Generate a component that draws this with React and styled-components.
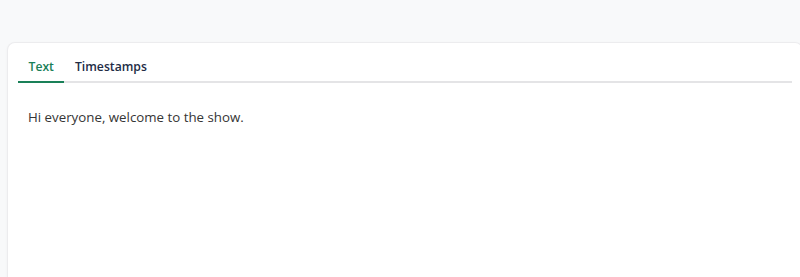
import React, { useState } from "react";
import styled, { createGlobalStyle } from "styled-components";

const GlobalStyle = createGlobalStyle`
    html, body {
        margin: 0;
        padding: 0;
        background: #f8f9fa;
        font-family: "Open Sans", "Noto Sans", sans-serif;
        overflow: hidden;
    }
`;

const Page = styled.div`
    width: 800px;
    height: 277px;
    padding: 42px 0 0 7px;
    box-sizing: border-box;
    overflow: hidden;
`;

const Card = styled.div`
    width: 796px;
    height: 235px;
    background: #ffffff;
    border: 1px solid #ececee;
    border-bottom: none;
    border-radius: 8px 8px 0 0;
    box-shadow: 0 1px 3px rgba(0, 0, 0, 0.04);
    padding: 0 10px;
    box-sizing: border-box;
`;

const TabList = styled.div`
    display: flex;
    align-items: stretch;
    border-bottom: 2px solid #e4e4e6;
    height: 38px;
`;

const Tab = styled.button`
    border: none;
    background: none;
    margin: 0 0 -2px 0;
    padding: 8px 10.5px 0;
    font-family: inherit;
    font-size: 12.2px;
    font-weight: 600;
    color: ${(p) => (p.$active ? "#1a8058" : "#222c45")};
    border-bottom: 2px solid ${(p) => (p.$active ? "#1a8058" : "transparent")};
    cursor: pointer;
`;

const Content = styled.div`
    padding: 25px 10px;
    font-size: 13.3px;
    color: #353535;
`;

export default function App() {
    const [tab, setTab] = useState("text");

    return (
        <Page>
            <GlobalStyle />
            <Card>
                <TabList>
                    <Tab $active={tab === "text"} onClick={() => setTab("text")}>
                        Text
                    </Tab>
                    <Tab $active={tab === "timestamps"} onClick={() => setTab("timestamps")}>
                        Timestamps
                    </Tab>
                </TabList>
                <Content>Hi everyone, welcome to the show.</Content>
            </Card>
        </Page>
    );
}
